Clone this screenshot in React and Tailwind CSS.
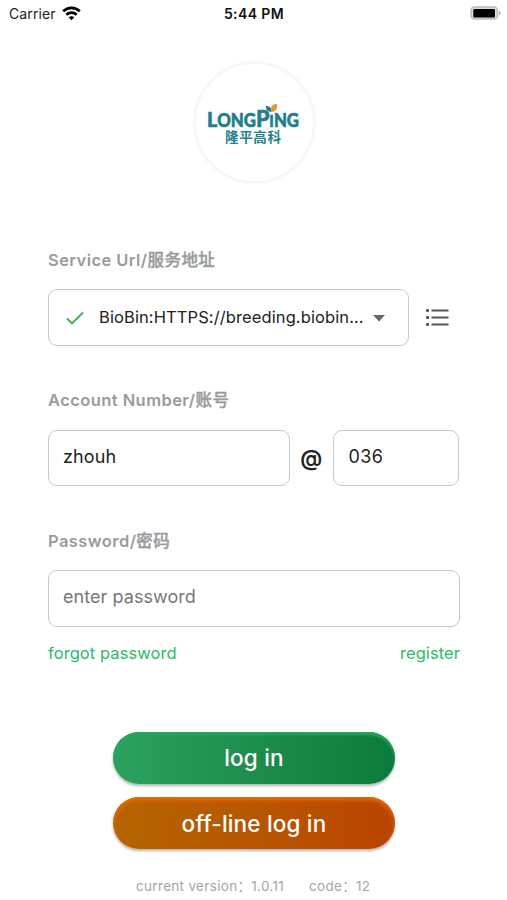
const Label = ({ children, local }) => (
    <div className="h-6 text-[16.5px] leading-6 font-semibold tracking-[0.43px] text-[#999b9c]">
        {children}/<span className="font-medium [-webkit-text-stroke:0.4px_#999b9c]">{local}</span>
    </div>
);

const Logo = () => (
    <div className="ml-[1px] size-[121px] rounded-full border-[2px] border-[#f6f6f6] bg-white shadow-[0_0_3px_#eeeeee] flex items-center justify-center">
        <svg width="96" height="46" viewBox="0 0 96 46" fill="#1f7f8c">
            <text x="1" y="27" textLength="92" lengthAdjust="spacingAndGlyphs" fontSize="18" fontWeight="900" stroke="#1f7f8c" strokeWidth=".6" className="font-['Lato',sans-serif]">
                <tspan fontSize="21">L</tspan>ONG<tspan fontSize="23">P</tspan><tspan fontSize="16">I</tspan>NG
            </text>
            <path d="M65.500 12C61 11.500 59.500 9 60 6C63.500 6 66 8 65.500 12Z" />
            <path d="M65.500 12C64 7 66.500 3.500 71 4C72 8.500 69.500 11.500 65.500 12Z" fill="#e8952f" />
            <text x="19" y="42" fontSize="13.500" textLength="56" className="font-['Noto_Sans_CJK_SC',sans-serif] font-bold">隆平高科</text>
        </svg>
    </div>
);

const StatusBar = () => (
    <div className="h-7 grid grid-cols-3 items-center pl-[9px] pr-[6px] text-[14px] text-[#222]">
        <div className="flex items-center gap-[6px]">
            <span className="pb-px tracking-[0.1px]">Carrier</span>
            <svg className="mb-[2px]" width="19" height="15" viewBox="0 0 19 15" fill="none" stroke="#000" strokeWidth="2.700">
                <path d="M1.200 5.300C6 .7 13 .7 17.800 5.300" />
                <path d="M4.300 8.700C7.300 5.900 11.700 5.900 14.700 8.700" />
                <path d="M9.500 14.200L6.700 11.300C8.300 9.900 10.700 9.900 12.300 11.300Z" fill="#000" stroke="none" />
            </svg>
        </div>
        <div className="-ml-[2px] pb-px text-center font-semibold tracking-[0.4px] text-[#111]">5:44 PM</div>
        <svg className="mb-[2px] justify-self-end" width="31" height="14" viewBox="0 0 31 14">
            <rect x="1" y="1" width="26.500" height="12" rx="3.500" fill="#ddd" stroke="#bbb" strokeWidth="1.500" />
            <rect x="3.300" y="3" width="21.700" height="8.400" rx="1" fill="#000" />
            <path d="M29 5C31 5.500 31 8.500 29 9Z" fill="#aaa" />
        </svg>
    </div>
);

const App = () => {
    return (
        <div className="h-[900px] w-[507px] overflow-hidden bg-white font-['Inter','Noto_Sans_CJK_SC',sans-serif] text-[#222]">
            <StatusBar />
            <div className="mt-[34px] flex justify-center">
                <Logo />
            </div>
            <div className="mt-[65px] px-12">
                <Label local="服务地址">Service Url</Label>
                <div className="mt-[17px] flex items-center">
                    <div className="flex h-[57px] w-[361px] items-center rounded-[9px] border-[1.5px] border-[#c8c8c8] pl-[17px]">
                        <svg width="18" height="14" viewBox="0 0 18 14" fill="none" stroke="#43a94f" strokeWidth="1.800">
                            <path d="M1 7.500L6 12.500L17 1.500" />
                        </svg>
                        <span className="ml-[15px] w-[267px] whitespace-nowrap text-[16.5px] tracking-[0.1px]">BioBin:HTTPS://breeding.biobin...</span>
                        <svg className="mt-px ml-[7px]" width="12" height="7" viewBox="0 0 12 7" fill="#666">
                            <path d="M0 0H12L6 6.500Z" />
                        </svg>
                    </div>
                    <svg className="ml-[17px]" width="23" height="19" viewBox="0 0 23 19" fill="#555">
                        <rect y="1" width="3" height="3" rx="1" />
                        <rect y="8" width="3" height="3" rx="1" />
                        <rect y="15" width="3" height="3" rx="1" />
                        <rect x="5.500" y="1.500" width="17" height="2" />
                        <rect x="5.500" y="8.500" width="17" height="2" />
                        <rect x="5.500" y="15.500" width="17" height="2" />
                    </svg>
                </div>
                <div className="mt-[42px]">
                    <Label local="账号">Account Number</Label>
                </div>
                <div className="mt-[18px] flex items-center text-[18px]">
                    <div className="flex h-[56px] w-[243px] items-center rounded-[9px] border-[1.5px] border-[#c8c8c8] pb-[3px] pl-[14px] tracking-[0.1px]">zhouh</div>
                    <span className="w-[43px] text-center text-[22px] font-semibold">@</span>
                    <div className="flex h-[56px] w-[127px] items-center rounded-[9px] border-[1.5px] border-[#c8c8c8] pb-[3px] pl-[15px] tracking-[0.3px]">036</div>
                </div>
                <div className="mt-[43px]">
                    <Label local="密码">Password</Label>
                </div>
                <div className="mt-[17px] flex h-[57px] w-[412px] items-center rounded-[9px] border-[1.5px] border-[#c8c8c8] pb-[4px] pl-[14px] text-[18px] tracking-[0.05px] text-[#777]">
                    enter password
                </div>
                <div className="mt-[14px] flex h-6 w-[412px] items-center justify-between text-[16.5px] tracking-[0.07px] text-[#2dbb66]">
                    <span>forgot password</span>
                    <span>register</span>
                </div>
            </div>
            <div className="mt-[67px] ml-[113px] flex w-[282px] flex-col gap-[13px] text-[22.5px] font-medium tracking-[0.18px] text-white">
                <button className="h-[52px] rounded-full bg-linear-to-r from-[#2ca15f] to-[#0b7a3a] shadow-[0_2px_3px_rgba(0,0,0,0.3),inset_0_3px_3px_#20a95c]">
                    log in
                </button>
                <button className="h-[52px] rounded-full bg-linear-to-r from-[#b56500] to-[#b94400] pt-px shadow-[0_2px_3px_rgba(0,0,0,0.3),inset_0_3px_4px_#ee6c00]">
                    off-line log in
                </button>
            </div>
            <div className="mt-[27px] ml-[136px] flex text-[13.5px] leading-5 tracking-[0.32px] whitespace-pre text-[#a5a5a5]">
                <span className="w-[173px]">current version：1.0.11</span>
                <span>code：12</span>
            </div>
        </div>
    );
};

export default App;
